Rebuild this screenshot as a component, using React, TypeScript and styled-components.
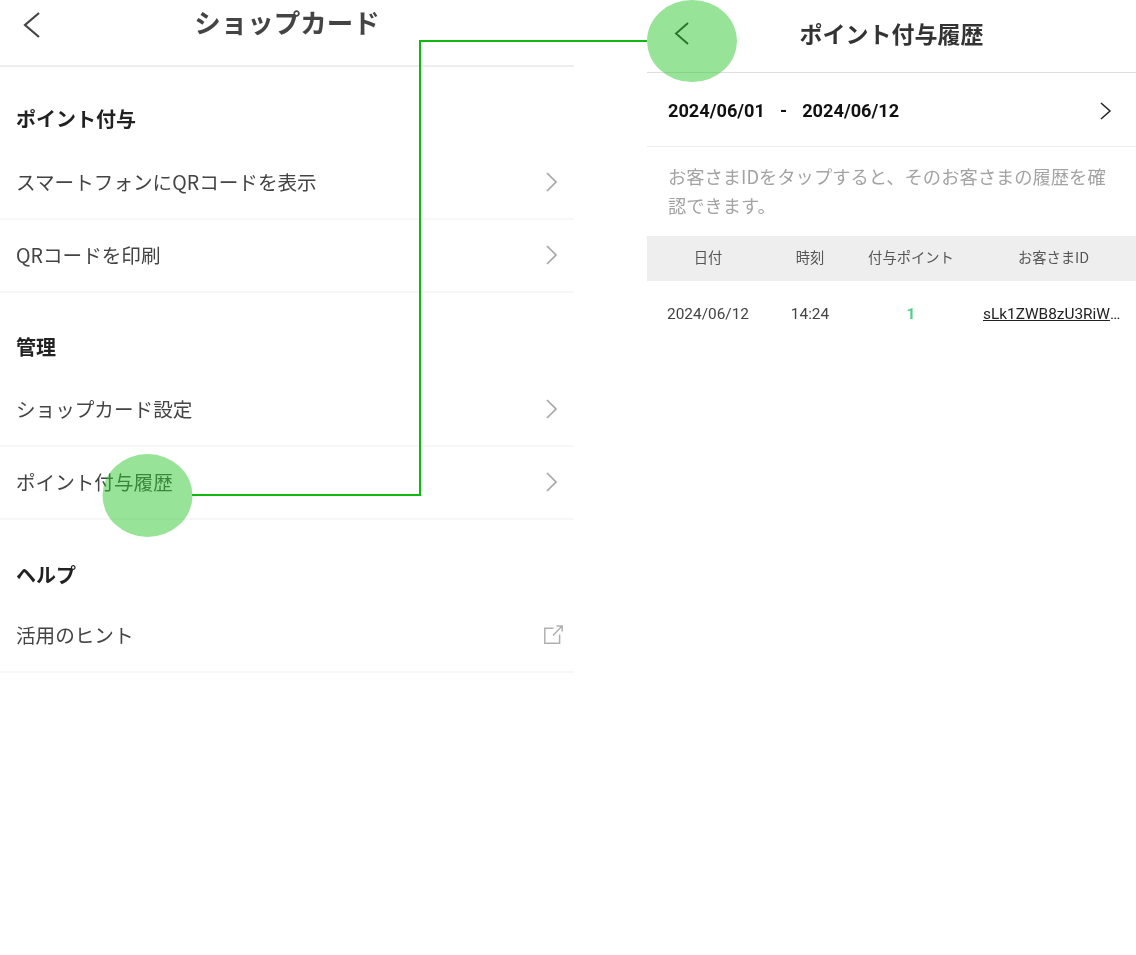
import React from 'react';
import styled, { createGlobalStyle } from 'styled-components';

const GlobalStyle = createGlobalStyle`
  html, body {
    margin: 0;
    padding: 0;
    background: #fff;
  }
  body {
    font-family: "Noto Sans CJK JP", "Roboto", sans-serif;
  }
`;

type MenuGroup = {
  title: string;
  items: { label: string; external?: boolean }[];
  headHeight: number;
  headPad: number;
};

const groups: MenuGroup[] = [
  {
    title: 'ポイント付与',
    headHeight: 80,
    headPad: 14,
    items: [{ label: 'スマートフォンにQRコードを表示' }, { label: 'QRコードを印刷' }],
  },
  {
    title: '管理',
    headHeight: 81,
    headPad: 13,
    items: [{ label: 'ショップカード設定' }, { label: 'ポイント付与履歴' }],
  },
  {
    title: 'ヘルプ',
    headHeight: 80,
    headPad: 11,
    items: [{ label: '活用のヒント', external: true }],
  },
];

type ChevronProps = { dir: 'left' | 'right'; w: number; h: number; color: string; stroke?: number };

const Chevron = ({ dir, w, h, color, stroke = 1.6 }: ChevronProps) => (
  <ChevronSvg width={w} height={h} viewBox={`0 0 ${w} ${h}`} fill="none" stroke={color} strokeWidth={stroke}>
    <path d={dir === 'left' ? `M${w} 0 0 ${h / 2} ${w} ${h}` : `M0 0 ${w} ${h / 2} 0 ${h}`} />
  </ChevronSvg>
);

const ExternalIcon = () => (
  <svg width="19" height="19" viewBox="0 0 19 19" fill="none" stroke="#b0b0b0" strokeWidth="1.5">
    <path d="M9.5 3.2H.8v15h14.8V9.5" />
    <path d="M9 10.5 17.8 1.2M12.5 1h5.7v5.6" />
  </svg>
);

const App = () => {
  return (
    <Page>
      <GlobalStyle />
      <LeftPanel>
        <LeftHeader>
          <BackSlot>
            <Chevron dir="left" w={14} h={24} color="#444" stroke={2.2} />
          </BackSlot>
          <LeftTitle>ショップカード</LeftTitle>
        </LeftHeader>
        {groups.map(group => (
          <section key={group.title}>
            <GroupHead height={group.headHeight} pad={group.headPad}>{group.title}</GroupHead>
            {group.items.map(item => (
              <MenuRow key={item.label}>
                <span>{item.label}</span>
                <RowIcon external={item.external}>
                  {item.external ? <ExternalIcon /> : <Chevron dir="right" w={9} h={18} color="#a6a6a6" stroke={1.7} />}
                </RowIcon>
              </MenuRow>
            ))}
          </section>
        ))}
      </LeftPanel>

      <RightPanel>
        <RightHeader>
          <RightBack>
            <Chevron dir="left" w={12} h={21} color="#222" stroke={1.9} />
          </RightBack>
          <RightTitle>ポイント付与履歴</RightTitle>
        </RightHeader>
        <DateRow>
          <DateRange>
            <span>2024/06/01</span>
            <span>-</span>
            <span>2024/06/12</span>
          </DateRange>
          <Chevron dir="right" w={9} h={16} color="#222" stroke={1.5} />
        </DateRow>
        <Hint>お客さまIDをタップすると、そのお客さまの履歴を確認できます。</Hint>
        <TableHead>
          <HeadCell>日付</HeadCell>
          <HeadCell>時刻</HeadCell>
          <HeadCell>付与ポイント</HeadCell>
          <HeadCell>お客さまID</HeadCell>
        </TableHead>
        <TableRow>
          <DataCell>2024/06/12</DataCell>
          <DataCell>14:24</DataCell>
          <PointCell>1</PointCell>
          <IdCell>sLk1ZWB8zU3RiW8kHq2x</IdCell>
        </TableRow>
      </RightPanel>

      <Callout width="1136" height="955" viewBox="0 0 1136 955">
        <path d="M192 495H420V41H647" fill="none" stroke="#10b810" strokeWidth="2" />
        <ellipse cx="147.500" cy="495.500" rx="45" ry="41.500" fill="rgba(48,200,48,0.5)" />
        <ellipse cx="692" cy="41" rx="45" ry="41" fill="rgba(48,200,48,0.5)" />
      </Callout>
    </Page>
  );
};

const Page = styled.div`
  position: relative;
  display: flex;
  align-items: flex-start;
  gap: 73px;
  width: 1136px;
  height: 955px;
  overflow: hidden;
`;
const ChevronSvg = styled.svg`
  display: block;
  overflow: visible;
`;
const LeftPanel = styled.div`
  width: 574px;
  flex: none;
  filter: blur(0.6px);
`;
const LeftHeader = styled.header`
  display: flex;
  align-items: center;
  justify-content: center;
  position: relative;
  box-sizing: border-box;
  height: 67px;
  padding-bottom: 21px;
  border-bottom: 2px solid #eeeeee;
`;
const BackSlot = styled.div`
  position: absolute;
  left: 25px;
  top: 13px;
`;
const LeftTitle = styled.h1`
  margin: 0;
  font-size: 26.5px;
  line-height: 46px;
  font-weight: 700;
  color: #444;
`;
const GroupHead = styled.h2<{ height: number; pad: number }>`
  display: flex;
  align-items: flex-end;
  box-sizing: border-box;
  height: ${props => props.height}px;
  margin: 0;
  padding: 0 16px ${props => props.pad}px;
  font-size: 20px;
  line-height: 28px;
  font-weight: 700;
  color: #222;
`;
const MenuRow = styled.div`
  display: flex;
  align-items: center;
  justify-content: space-between;
  box-sizing: border-box;
  height: 73px;
  padding: 0 16px 2px;
  font-size: 19.6px;
  color: #444;
  border-bottom: 2px solid #f7f7f7;
`;
const RowIcon = styled.div<{ external?: boolean }>`
  display: flex;
  margin-right: ${props => (props.external ? -5 : 2)}px;
`;
const RightPanel = styled.div`
  width: 489px;
  flex: none;
  filter: blur(0.3px);
`;
const RightHeader = styled.header`
  display: flex;
  align-items: center;
  justify-content: center;
  position: relative;
  box-sizing: border-box;
  height: 73px;
  padding-bottom: 7px;
  border-bottom: 1px solid #dedede;
`;
const RightBack = styled.div`
  position: absolute;
  left: 29px;
  top: 23px;
`;
const RightTitle = styled.h1`
  margin: 0;
  font-size: 23px;
  font-weight: 700;
  color: #333;
`;
const DateRow = styled.div`
  display: flex;
  align-items: center;
  justify-content: space-between;
  box-sizing: border-box;
  height: 74px;
  padding: 2px 26px 0 21px;
  border-bottom: 1px solid #eeeeee;
`;
const DateRange = styled.div`
  display: flex;
  gap: 15px;
  font-family: "Roboto", sans-serif;
  font-size: 18.2px;
  font-weight: 700;
  color: #111;
`;
const Hint = styled.p`
  margin: 0;
  padding: 15px 21px;
  height: 89px;
  box-sizing: border-box;
  font-size: 18.3px;
  line-height: 29px;
  color: #a3a3a3;
`;
const tableColumns = '122px 82px 120px 165px';
const TableHead = styled.div`
  display: grid;
  grid-template-columns: ${tableColumns};
  align-items: center;
  box-sizing: border-box;
  height: 45px;
  padding-bottom: 4px;
  background: #eeeeee;
`;
const HeadCell = styled.div`
  text-align: center;
  font-size: 14.3px;
  color: #555;
`;
const TableRow = styled.div`
  display: grid;
  grid-template-columns: ${tableColumns};
  align-items: center;
  height: 66px;
`;
const DataCell = styled.div`
  text-align: center;
  font-family: "Roboto", sans-serif;
  font-size: 15.4px;
  color: #444;
`;
const PointCell = styled(DataCell)`
  font-weight: 700;
  color: #4fcf8a;
`;
const IdCell = styled(DataCell)`
  padding: 0 10px 0 12px;
  overflow: hidden;
  white-space: nowrap;
  text-overflow: ellipsis;
  text-align: left;
  color: #222;
  text-decoration: underline;
`;
const Callout = styled.svg`
  position: absolute;
  left: 0;
  top: 0;
  pointer-events: none;
`;

export default App;
